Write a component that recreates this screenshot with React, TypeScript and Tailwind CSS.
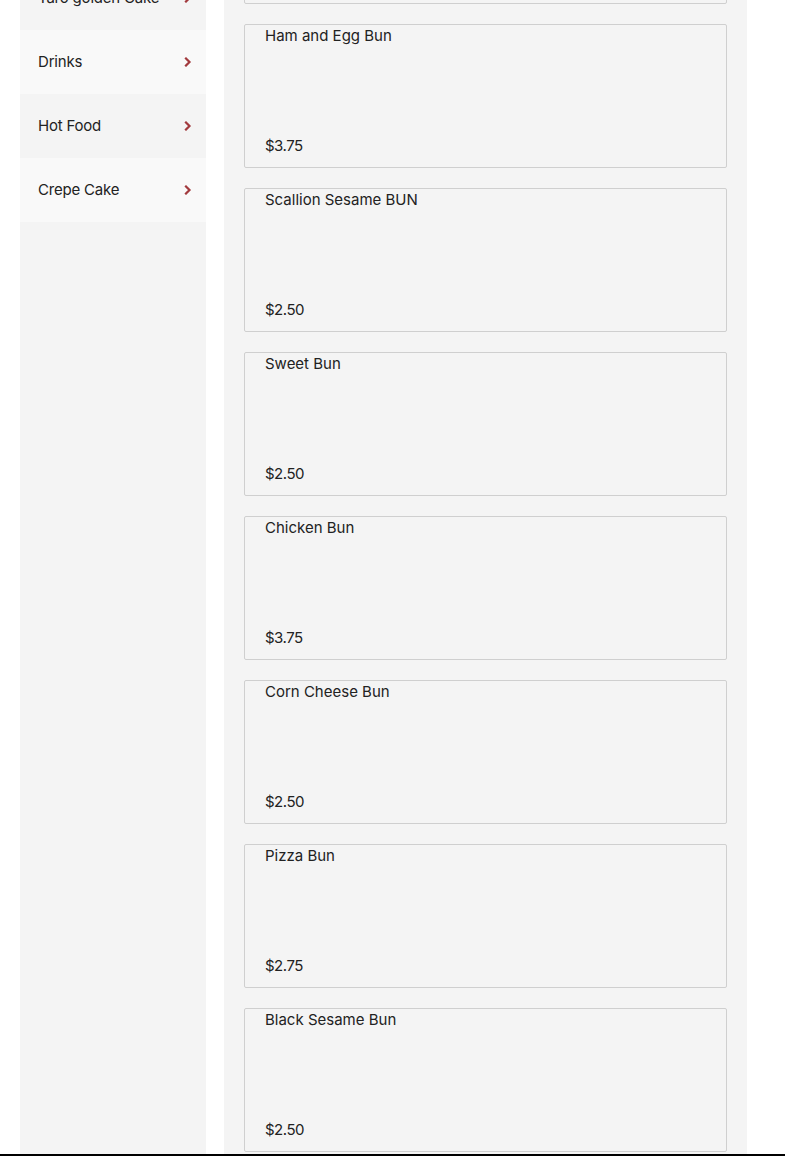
import React from 'react';

const categories = [
  { name: 'Taro golden Cake', light: false },
  { name: 'Drinks', light: true },
  { name: 'Hot Food', light: false },
  { name: 'Crepe Cake', light: true },
];

// first card is scrolled out of view; only its bottom edge shows
const items = [
  { name: '', price: '' },
  { name: 'Ham and Egg Bun', price: '$3.75' },
  { name: 'Scallion Sesame BUN', price: '$2.50' },
  { name: 'Sweet Bun', price: '$2.50' },
  { name: 'Chicken Bun', price: '$3.75' },
  { name: 'Corn Cheese Bun', price: '$2.50' },
  { name: 'Pizza Bun', price: '$2.75' },
  { name: 'Black Sesame Bun', price: '$2.50' },
];

const Chevron = () => (
  <svg width="8" height="10" viewBox="0 0 8 10" className="text-[#a23a3e]">
    <path d="M2 1.5 L5.5 5 L2 8.5" fill="none" stroke="currentColor" strokeWidth="2.2" strokeLinecap="square" />
  </svg>
);

export default function App() {
  return (
    <div className="bg-white font-['Inter','Liberation_Sans',sans-serif] text-[#222]">
      <div className="h-[1154px] overflow-hidden flex items-start pl-[20px] gap-[18px]">
        {/* category list */}
        <div className="w-[186px] -mt-[34px] h-[1200px] bg-[#f4f4f4]">
          {categories.map((c) => (
            <div
              key={c.name}
              className={`h-[64px] flex items-center justify-between pl-[18px] pr-[14px] text-[15px] ${c.light ? 'bg-[#f9f9f9]' : 'bg-[#f4f4f4]'}`}
            >
              <span className="tracking-[-0.2px]">{c.name}</span>
              <Chevron />
            </div>
          ))}
        </div>

        {/* menu items */}
        <div className="w-[523px] -mt-[140px] h-[1400px] bg-[#f4f4f4] px-[20px] flex flex-col gap-[20px]">
          {items.map((it, i) => (
            <div
              key={i}
              className="h-[144px] shrink-0 border border-[#cfcfcf] rounded-[2px] bg-[#f4f4f4] flex flex-col justify-between px-[20px] pt-[1px] pb-[11px] text-[15px] leading-[20px]"
            >
              <span>{it.name}</span>
              <span className="tracking-[-0.5px]">{it.price}</span>
            </div>
          ))}
        </div>
      </div>
      <div className="h-[2px] bg-black" />
    </div>
  );
}
